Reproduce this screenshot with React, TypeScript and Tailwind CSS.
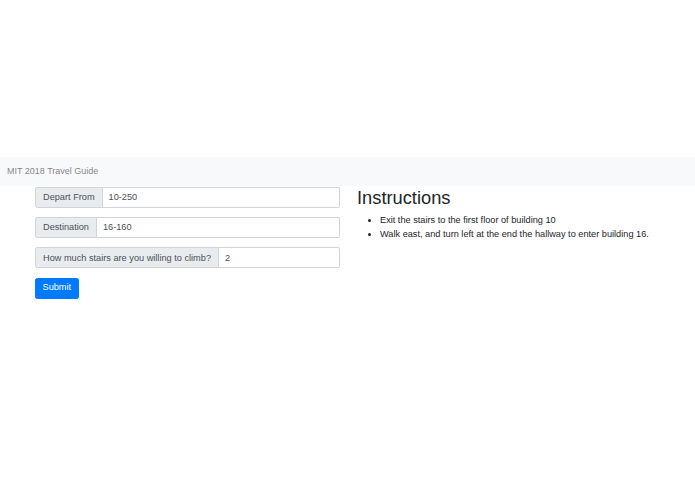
import React from "react";

const font = { fontFamily: '"Liberation Sans", Arial, Helvetica, sans-serif' };

function Group({ label, value }: { label: string; value: string }) {
  return (
    <div className="flex h-[21px] mb-[9.4px] text-[9.2px] leading-[14px]">
      <span className="flex items-center px-[7px] bg-[#e9ecef] border border-[#ced4da] rounded-l-[2.3px] text-[#495057] whitespace-nowrap">
        {label}
      </span>
      <div className="flex-1 flex items-center px-[6px] border border-l-0 border-[#ced4da] rounded-r-[2.3px] text-[#495057] bg-white">
        {value}
      </div>
    </div>
  );
}

export default function App() {
  return (
    <div className="w-[695px] h-[494px] bg-white pt-[157px] text-[#212529]" style={font}>
      <nav className="h-[29px] bg-[#f8f9fa] flex items-center px-[7px]">
        <span className="text-[9px] text-[rgba(0,0,0,0.5)]">MIT 2018 Travel Guide</span>
      </nav>
      <div className="flex pl-[35px] pt-[0.5px]">
        <div className="w-[305px]">
          <Group label="Depart From" value="10-250" />
          <Group label="Destination" value="16-160" />
          <Group label="How much stairs are you willing to climb?" value="2" />
          <button className="block h-[21px] px-[6.5px] bg-[#007bff] text-white text-[9.2px] rounded-[2.3px] border border-[#007bff]">
            Submit
          </button>
        </div>
        <div className="ml-[17px]">
          <h2 className="text-[18.3px] leading-[22px] mb-[4px] font-normal">Instructions</h2>
          <ul className="list-disc pl-[23px] text-[9.2px] leading-[14px]">
            <li>Exit the stairs to the first floor of building 10</li>
            <li>Walk east, and turn left at the end the hallway to enter building 16.</li>
          </ul>
        </div>
      </div>
    </div>
  );
}
